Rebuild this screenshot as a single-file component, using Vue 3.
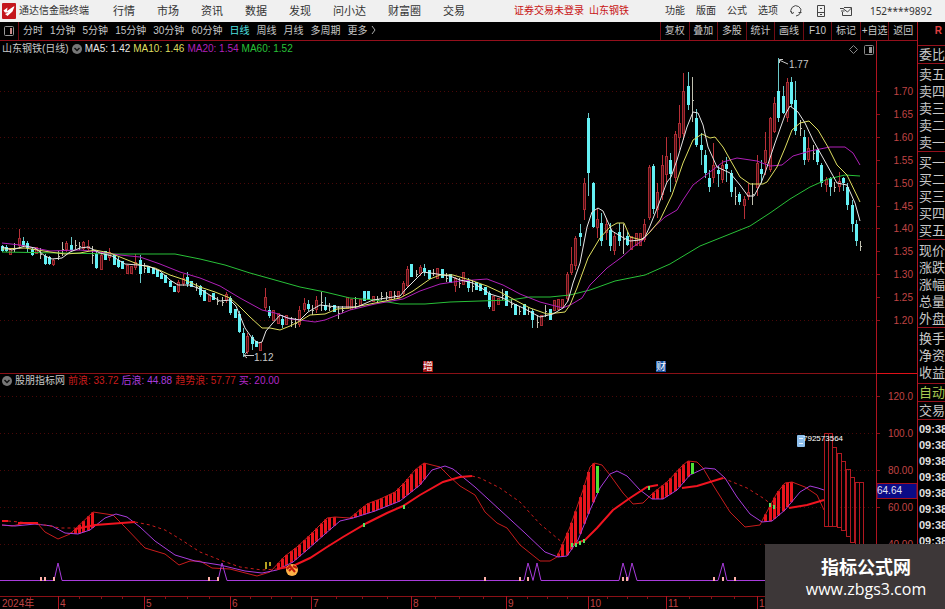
<script setup>
const navItems = ['行情', '市场', '资讯', '数据', '发现', '问小达', '财富圈', '交易']
const tools = ['功能', '版面', '公式', '选项']
const periods = ['分时', '1分钟', '5分钟', '15分钟', '30分钟', '60分钟', '日线', '周线', '月线', '多周期', '更多']
const actions = ['复权', '叠加', '多股', '统计', '画线', 'F10', '标记', '+自选', '返回']
const quoteGroups = [
  ['委比'],
  ['卖五', '卖四', '卖三', '卖二', '卖一'],
  ['买一', '买二', '买三', '买四', '买五'],
  ['现价', '涨跌', '涨幅', '总量', '外盘'],
  ['换手', '净资', '收益'],
]
const ticks = Array.from({ length: 8 }, () => '09:38')

const averages = [
  { label: 'MA5: 1.42', tone: 'white' },
  { label: 'MA10: 1.46', tone: 'yellow' },
  { label: 'MA20: 1.54', tone: 'magenta' },
  { label: 'MA60: 1.52', tone: 'green' },
]
const waves = [
  { label: '前浪: 33.72', tone: 'red' },
  { label: '后浪: 44.88', tone: 'purple' },
  { label: '趋势浪: 57.77', tone: 'red' },
  { label: '买: 20.00', tone: 'pink' },
]

// candles sit on whole pixels so that their bodies stay crisp
const candleX = (i) => Math.floor(2 + i * 4.315) + 0.5

// kind (c down, r up, w flat), high, low, body top, body bottom
const candleRows = `
c 245 252 246 251|c 245 252 247 251|r 248 255|w 243 252|r 229 249 238 246|c 237 247 241 245|c 241 252 243 248|c 248 256 249 255|r 247 254|w 248 259
c 254 265 256 264|c 256 265 257 264|r 259 266 260 265|w 251 260|w 242 256|r 241 252 243 250|c 237 251 245 250|w 240 249|w 242 250|r 241 250 242 249
r 240 251 246 249|w 246 264|c 252 269 254 268|r 252 270 255 270|c 251 260|r 248 261 252 258|c 255 265|c 257 268 260 267|c 261 269|r 265 274
r 266 274|r 254 270 262 268|c 255 283 260 274|w 263 273|c 266 273|c 268 274|c 270 277|c 273 279|c 275 283|c 281 287
c 286 292|r 280 293 282 292|r 274 286 278 284|c 272 287 277 284|c 281 287|w 283 291|c 285 297 286 295|c 290 301|r 295 302|c 293 300
w 297 305|w 297 306|r 292 303 294 301|c 296 315 298 313|c 309 318|c 311 333 314 332|c 328 357 333 353|r 333 354 336 352|c 335 350 337 344|c 341 347
r 342 351|r 288 311 297 308|c 306 318 310 316|r 310 321|r 313 324|c 315 328 319 325|r 315 325|w 317 327|w 318 328|r 306 327 310 325
r 298 312 303 310|c 300 311 304 309|w 305 315|r 296 313 300 310|w 292 311|c 297 311 305 310|w 303 311|c 305 312|w 306 319|w 306 313
r 297 309|r 299 310|w 297 309|r 299 306|c 291 301|c 291 300|r 296 302|w 296 302|w 292 300|w 292 300
r 291 300|w 291 299|r 291 298|r 281 296 283 294|r 266 287 269 286|c 264 277|w 270 277|r 265 276 267 274|c 264 276 268 272|c 270 279
w 269 276|r 268 279|c 269 278|w 273 282|c 274 283|r 277 292 278 286|w 278 288|r 272 285|c 278 292 280 288|w 280 292
c 282 290|c 284 291|c 287 295|c 291 309 293 307|r 296 311|r 298 305|w 289 300|c 291 306|w 299 308|c 304 315
w 306 315|c 304 315|w 307 315|c 309 328 311 320|w 315 328|r 315 326|w 305 317|c 309 320|r 300 311|r 299 310
r 299 308|r 272 302 274 299|r 247 275 264 273|r 236 270 238 266|c 224 246 233 237|r 178 220 183 210|c 113 196 118 173|c 182 228 183 227|r 208 238 219 228|c 213 246 223 241
r 218 240 224 233|c 223 251 230 246|r 232 255 236 251|c 223 246 232 241|w 224 254|c 232 246 236 245|r 236 250|r 233 246|r 233 246|r 219 242 224 240
r 165 220 167 218|c 164 214 166 209|r 183 218 192 210|r 155 200 165 195|r 137 182 156 175|c 153 192 160 174|r 131 182 134 178|r 105 150 123 138|r 73 140 91 134|c 72 110 86 105
w 77 122|c 109 147 118 145|c 133 165 145 150|c 150 178 155 173|c 170 192 178 187|r 143 183 165 178|c 165 187 170 174|r 160 183 165 180|c 157 182 164 169|c 170 197 173 192
w 187 205|c 192 205 194 202|r 196 219 199 206|r 183 200 192 197|w 183 205|r 155 196 163 188|c 160 183 169 174|r 132 175 150 163|r 117 172 118 170|r 97 133 103 132
c 58 122 91 118|c 86 114 96 113|r 78 122 82 118|c 77 107 82 104|c 81 135 100 131|w 120 136|c 130 165 137 160|r 137 162 148 160|w 145 160|c 148 165 150 162
c 163 187 165 183|r 177 192 179 185|c 177 196 178 187|w 182 192|r 172 192 181 187|c 177 191 178 183|c 183 210 187 205|c 200 232 205 224|c 220 246 224 241|w 241 251`

const candles = candleRows.trim().split(/[|\n]/).map((row, i) => {
  const [kind, ...n] = row.split(' ')
  const [high, low, top = high, bottom = low] = n.map(Number)
  return { kind, x: candleX(i), high, low, top, bottom }
})

const ma5 = '2,247 12,250 25,246 35,248 45,256 52,259 62,258 70,252 80,248 88,247 100,253 112,256 125,264 138,265 148,266 160,271 170,280 178,285 190,285 200,289 208,294 220,301 230,300 236,306 245,328 252,338 258,343 262,342 266,331 272,324 280,315 288,318 300,320 308,312 320,305 337,307 357,307 373,300 400,296 405,290 415,280 423,272 437,274 450,276 460,280 473,283 483,289 490,294 503,298 510,302 523,308 540,317 553,314 563,308 568,301 573,283 580,263 587,227 592,212 598,208 603,211 607,220 612,231 622,237 630,241 640,240 645,237 650,226 658,206 667,182 671,177 677,160 687,127 693,112 698,113 703,125 708,147 717,167 730,173 740,185 748,196 754,196 761,183 765,173 775,143 785,115 790,106 798,112 805,123 813,140 827,165 837,183 847,185 855,203 860,221'
const ma10 = '2,249 25,248 50,252 65,254 80,253 95,250 110,253 125,259 140,265 155,268 170,275 185,280 200,287 215,292 230,298 240,307 250,317 262,328 270,328 280,330 290,326 300,321 310,315 325,314 337,309 350,308 375,303 400,298 413,291 430,279 440,275 453,275 470,280 487,286 500,292 513,299 530,308 547,314 565,312 570,305 577,288 588,258 600,238 610,227 617,223 624,223 630,237 642,240 650,232 660,220 672,195 683,163 693,140 702,134 710,138 715,137 723,147 732,163 740,177 750,184 763,184 767,182 777,167 785,148 792,130 800,123 809,121 818,130 828,147 837,165 847,175 860,202'
const ma20 = '2,243 20,245 50,251 80,250 100,252 120,255 140,257 160,264 180,272 200,278 220,286 240,298 262,310 275,313 290,319 300,320 315,322 325,320 350,310 375,304 403,299 420,291 440,284 460,281 487,279 503,285 520,294 540,302 563,308 572,304 582,298 590,285 607,268 622,257 633,247 643,240 653,228 665,217 677,210 683,200 693,185 710,172 723,162 737,158 757,161 770,166 782,165 793,156 810,151 830,147 845,147 853,153 860,165'
const ma60 = '2,252 60,253 115,254 175,254 200,259 225,265 250,273 275,280 300,287 325,292 350,298 375,300 400,304 425,304 450,302 480,301 510,300 530,297 550,297 570,295 590,290 615,281 645,275 670,264 700,246 730,234 750,226 770,213 790,199 810,187 828,179 845,175 860,176'

const front = '2,525 12,526 25,523 38,524 45,532 58,539 70,534 93,512 113,515 125,527 145,548 165,554 179,565 190,561 200,561 212,568 230,569 257,576 270,572 285,556 297,547 310,535 327,518 335,517 350,518 367,504 380,499 395,492 405,482 415,470 424,463 440,467 450,477 460,486 475,495 485,512 497,523 507,528 520,545 530,553 540,561 550,561 557,557 570,527 583,490 590,467 594,463 602,465 610,475 623,493 633,504 643,503 653,493 667,482 683,465 688,461 697,462 703,468 713,485 730,512 745,527 760,525 763,519 777,493 785,483 792,482 805,487 817,495 824,510'
const back = '2,525 15,526 35,524 52,526 65,533 78,534 90,530 105,518 116,514 127,517 140,527 155,541 175,555 195,561 220,565 245,571 262,573 277,570 293,562 307,550 325,534 340,521 353,518 375,511 400,501 420,485 432,470 445,466 453,469 475,487 500,510 525,533 545,552 558,557 567,556 578,540 590,510 600,488 610,474 617,471 627,476 640,490 652,499 663,499 677,490 690,475 705,468 715,469 725,478 737,497 750,514 762,522 772,521 785,510 800,492 810,486 818,488 824,490'
const trendUp = [
  '2,521 8,521',
  '18,523 38,523',
  '75,529 95,525 135,522',
  '277,569 293,566 310,558 327,547 343,537 367,523 387,513 403,506 420,495 443,482 460,477 472,476',
  '572,545 585,540 597,528 613,510 630,498 647,487 658,485',
  '682,488 697,486 723,478',
  '789,508 807,505 824,500',
]
const trendDown = [
  '8,521 30,523 45,525 60,528 75,528',
  '135,522 150,525 165,530 180,539 200,552 220,560 240,567 262,570 277,569',
  '472,476 480,478 500,488 520,502 540,524 563,543',
  '723,478 730,481 747,488 763,498 775,507',
]

const parse = (s) => s.split(' ').map((p) => p.split(',').map(Number))
const frontPts = parse(front)
const backPts = parse(back)
function valueAt(pts, x) {
  for (let i = 1; i < pts.length; i++) {
    if (x <= pts[i][0]) {
      const [x0, y0] = pts[i - 1]
      const [x1, y1] = pts[i]
      return y0 + ((x - x0) / (x1 - x0)) * (y1 - y0)
    }
  }
  return pts[pts.length - 1][1]
}
const risingRanges = [[68, 94], [276, 336], [349, 426], [558, 595], [652, 689], [763, 794]]
const energyBars = candles
  .map(({ x }) => ({ x, top: valueAt(frontPts, x), bottom: valueAt(backPts, x) }))
  .filter(({ x, top, bottom }) => bottom > top && risingRanges.some(([a, b]) => x >= a && x <= b))

const spikes = 'M0 580.500H54L58 563L62 580.500H218L222 563L227 580.500H524L528 563L533 580.500L537 563L541 580.500H619L623 563L628 580.500L632 563L637 580.500H718L723 563L727 580.500H876'
const pinkMarks = [41, 45, 54, 209, 218, 485, 520, 528, 623, 627, 714, 723, 735]
const greenMarks = [[364, 523], [404, 505], [572, 543], [576, 543], [580, 541], [584, 539], [649, 486], [770, 503], [774, 505]]
const boxes = [
  [824, 433, 526], [828, 433, 526], [832, 447, 526], [837, 453, 527], [841, 461, 530],
  [846, 469, 536], [850, 477, 542], [855, 482, 552], [859, 482, 556],
].map(([x, top, bottom]) => ({ x, top, height: bottom - top }))

const priceTicks = Array.from({ length: 11 }, (_, i) => ({
  label: (1.7 - i * 0.05).toFixed(2),
  y: 91 + Math.round(i * 22.9),
  major: i % 2 === 0,
}))
const waveTicks = [['120.0', 396], ['100.0', 433], ['80.00', 470], ['60.00', 507], ['40.00', 544]]
const months = [['2024年', 0], ['4', 58], ['5', 144], ['6', 230], ['7', 311], ['8', 411], ['9', 506], ['10', 588], ['11', 666], ['12', 757]]
const minorTicks = [30, 79, 101, 122, 165, 187, 209, 250, 271, 291, 336, 362, 387, 435, 459, 483, 527, 547, 567, 607, 627, 647, 689, 711, 734]
</script>

<template>
  <div class="terminal">
    <header class="topbar">
      <svg class="logo" viewBox="0 0 14 16" aria-hidden="true">
        <rect width="14" height="16" rx="1" fill="#c4161c" />
        <path d="M1.500 7.500L5.500 4.500L5 8L11.500 3.500L12.500 3.500L10.500 8.500L5.500 13L3 11L6.500 9.500L3 9.500Z" fill="#fff" />
      </svg>
      <span class="brand">通达信金融终端</span>
      <nav class="nav">
        <a v-for="item in navItems" :key="item" href="#">{{ item }}</a>
      </nav>
      <span class="status">证券交易未登录</span>
      <span class="stock">山东钢铁</span>
      <div class="tools">
        <button v-for="tool in tools" :key="tool" type="button">{{ tool }}</button>
        <button type="button" aria-label="客服">
          <svg class="tool-icon" viewBox="0 0 14 14"><path d="M3 9.500A5 4.800 0 1 1 11.500 8.500Q10.500 11.500 7 12M1.500 7L3 9.500L5 8.500M9.500 8.500H12.500" /></svg>
        </button>
        <button type="button" aria-label="手机">
          <svg class="tool-icon" viewBox="0 0 14 14"><path d="M3.500 1.500H10.500V12.500H3.500ZM3.500 8.500H10.500M6 4.500H8M6 10.500H8" /></svg>
        </button>
        <button type="button" aria-label="邮件">
          <svg class="tool-icon" viewBox="0 0 14 14"><path d="M5 3.500H12.500V11.500H3.500V8M4 4.500L8.500 8L12.500 4M1 4.500H4.500M2 7H5.500" /></svg>
        </button>
        <span class="account">152****9892</span>
      </div>
    </header>

    <div class="workspace">
      <main class="charts">
        <div class="periodbar">
          <button class="panel-toggle" type="button" aria-label="面板">
            <svg viewBox="0 0 10 10"><rect x=".5" y=".5" width="9" height="9" rx="1" fill="none" stroke="#999" /><rect x="6" y="2" width="2" height="6" fill="#c88" /></svg>
          </button>
          <div class="periods">
            <button v-for="p in periods" :key="p" type="button" :class="{ active: p === '日线' }">
              {{ p }}<svg v-if="p === '更多'" class="chevron" viewBox="0 0 5 8"><path d="M1 0L4 4L1 8" /></svg>
            </button>
          </div>
          <div class="actions">
            <button v-for="a in actions" :key="a" type="button">{{ a }}</button>
          </div>
        </div>

        <section class="panel">
          <div class="legend">
            <span>山东钢铁(日线)</span>
            <svg class="drop" viewBox="0 0 10 10"><circle cx="5" cy="5" r="5" fill="#777" /><path d="M2.500 4L5 6.500L7.500 4" fill="none" stroke="#111" stroke-width="1.500" /></svg>
            <span v-for="m in averages" :key="m.label" :class="m.tone">{{ m.label }}</span>
          </div>
          <svg class="plot" viewBox="0 41 917 333">
            <g class="grid">
              <template v-for="t in priceTicks" :key="t.label">
                <line v-if="t.major" x1="0" x2="876" :y1="t.y + 0.5" :y2="t.y + 0.5" />
              </template>
            </g>
            <g v-for="(c, i) in candles" :key="i" :class="['candle', c.kind]">
              <line :x1="c.x" :x2="c.x" :y1="c.high" :y2="c.low" />
              <rect v-if="c.kind === 'c'" :x="c.x - 1.5" :y="c.top" width="3" :height="c.bottom - c.top" />
              <rect v-else-if="c.kind === 'r'" :x="c.x - 1" :y="c.top + 0.5" width="2" :height="c.bottom - c.top - 1" />
              <line v-else :x1="c.x - 0.5" :x2="c.x + 1.5" :y1="Math.round((c.high + c.low) / 2) + 0.5" :y2="Math.round((c.high + c.low) / 2) + 0.5" />
            </g>
            <polyline class="curve green" :points="ma60" />
            <polyline class="curve magenta" :points="ma20" />
            <polyline class="curve yellow" :points="ma10" />
            <polyline class="curve white" :points="ma5" />
            <path class="pointer" d="M788 64L779 60M783 59.500H779.500V63M254 355.500H244M247 352L244 355.500L247 358" />
            <text class="note" x="789" y="68">1.77</text>
            <text class="note" x="254" y="361">1.12</text>
            <path class="pointer dim" d="M853.500 45.500L857.500 49.500L853.500 53.500L849.500 49.500Z" />
            <rect class="pointer dim" x="864.500" y="45.500" width="9" height="9" rx="1" />
            <rect x="869" y="47" width="3" height="6" fill="#999" />
            <rect x="423" y="361" width="10" height="11" fill="#a01010" />
            <text class="event" x="423" y="370">增</text>
            <rect x="656" y="361" width="10" height="11" fill="#1850a0" />
            <text class="event" x="656" y="370">财</text>
            <line class="frame" x1="876.500" x2="876.500" y1="41" y2="374" />
            <line class="frame dark" x1="0" x2="876" y1="373.500" y2="373.500" />
            <line class="frame bright" x1="876" x2="917" y1="373.500" y2="373.500" />
            <g v-for="t in priceTicks" :key="t.label">
              <line class="frame dark" x1="877" x2="880" :y1="t.y + 0.5" :y2="t.y + 0.5" />
              <text class="scale" x="913" :y="t.y + 4">{{ t.label }}</text>
            </g>
          </svg>
        </section>

        <section class="panel">
          <div class="legend lower">
            <svg class="drop" viewBox="0 0 10 10"><circle cx="5" cy="5" r="5" fill="#777" /><path d="M2.500 4L5 6.500L7.500 4" fill="none" stroke="#111" stroke-width="1.500" /></svg>
            <span>股朋指标网</span>
            <span v-for="w in waves" :key="w.label" :class="w.tone">{{ w.label }}</span>
          </div>
          <svg class="plot" viewBox="0 374 917 235">
            <g class="grid">
              <line v-for="[label, y] in waveTicks" :key="label" x1="0" x2="876" :y1="y + 0.5" :y2="y + 0.5" />
            </g>
            <rect v-for="b in energyBars" :key="b.x" class="energy" :x="b.x - 1.5" :y="b.top" width="3" :height="b.bottom - b.top" />
            <polyline class="curve red" :points="front" />
            <polyline class="curve purple" :points="back" />
            <polyline v-for="t in trendDown" :key="t" class="curve red dashed" :points="t" />
            <polyline v-for="t in trendUp" :key="t" class="curve trend" :points="t" />
            <rect x="596" y="466" width="3" height="27" fill="#4de234" />
            <rect x="691" y="463" width="3" height="11" fill="#4de234" />
            <rect v-for="[x, y] in greenMarks" :key="x" :x="x - 1" :y="y" width="2" height="4" fill="#5be05b" />
            <path d="M266 562V569M270 562V566" stroke="#b5a020" stroke-width="2" />
            <path class="curve purple" :d="spikes" />
            <rect v-for="x in pinkMarks" :key="x" :x="x - 1" y="577" width="2" height="4" fill="#ffb0a8" />
            <circle cx="292" cy="570" r="6" fill="#ffb347" />
            <path d="M287 569L290 566L295 572M297 568L293 566M289 571L291 569" fill="none" stroke="#c01808" stroke-width="2" />
            <rect v-for="b in boxes" :key="b.x" class="box" :x="b.x + 0.5" :y="b.top + 0.5" width="4" :height="b.height" />
            <rect x="797" y="435" width="8" height="12" rx="1" fill="#8fc0ee" />
            <path d="M799 438.500H803M799 443.500H803" stroke="#e8f4ff" />
            <text class="code" x="803" y="441">792573564</text>
            <line class="frame dark" x1="0" x2="876" y1="596.500" y2="596.500" />
            <path v-for="x in minorTicks" :key="x" class="frame dark" :d="`M${x + 0.5} 596V599`" />
            <g v-for="[label, x] in months" :key="label">
              <line v-if="x" class="frame" :x1="x + 0.5" :x2="x + 0.5" y1="596" y2="609" />
              <text class="month" :x="x + 2" y="607">{{ label }}</text>
            </g>
            <line class="frame" x1="876.500" x2="876.500" y1="374" y2="609" />
            <g v-for="[label, y] in waveTicks" :key="label">
              <line class="frame dark" x1="877" x2="880" :y1="y + 0.5" :y2="y + 0.5" />
              <text class="scale" x="913" :y="y + 4">{{ label }}</text>
            </g>
            <rect x="877" y="483.500" width="40" height="15" fill="#0b0b86" stroke="#a01020" />
            <text class="current" x="877" y="494">64.64</text>
          </svg>
        </section>
      </main>

      <aside class="quotes">
        <div class="mark">R</div>
        <div v-for="(group, g) in quoteGroups" :key="g" class="group">
          <div v-for="row in group" :key="row">{{ row }}</div>
        </div>
        <div class="group auto">自动</div>
        <div class="group">交易</div>
        <div class="times">
          <div v-for="(t, i) in ticks" :key="i">{{ t }}</div>
        </div>
      </aside>
    </div>

    <div class="watermark">
      <strong>指标公式网</strong>
      <span>www.zbgs3.com</span>
    </div>
  </div>
</template>

<style>
body {
  margin: 0;
  background: #000;
}
</style>

<style scoped>
.terminal {
  position: relative;
  min-height: 100vh;
  overflow: hidden;
  background: #000;
  color: #c8c8c8;
  font: 10px/14px "Liberation Sans", "Noto Sans CJK SC", sans-serif;
}
button {
  padding: 0;
  border: 0;
  background: none;
  color: inherit;
  font: inherit;
  white-space: nowrap;
}
a {
  color: inherit;
  text-decoration: none;
}
.topbar {
  display: flex;
  align-items: center;
  height: 22px;
  padding: 0 13px 0 2px;
  background: #f0f0f0;
  color: #333;
  white-space: nowrap;
}
.logo {
  width: 14px;
  height: 16px;
  margin-right: 3px;
}
.nav {
  display: flex;
  gap: 22px;
  margin-left: 24px;
  font-size: 11px;
}
.status {
  margin-left: 49px;
  color: #c81414;
}
.stock {
  margin-left: 5px;
  color: #c81414;
}
.tools {
  display: flex;
  align-items: center;
  gap: 11px;
  margin-left: auto;
}
.tool-icon {
  display: block;
  width: 14px;
  height: 14px;
  fill: none;
  stroke: #444;
}
.account {
  margin-left: 6px;
  font-family: "Noto Sans", "Liberation Sans", sans-serif;
}
.workspace {
  display: flex;
}
.charts {
  flex: 1;
  min-width: 0;
}
.periodbar {
  display: flex;
  box-sizing: border-box;
  height: 19px;
  border-bottom: 1px solid #94101c;
}
.panel-toggle {
  display: flex;
  align-items: center;
  justify-content: center;
  width: 19px;
  border-right: 1px solid #700c14;
}
.panel-toggle svg {
  width: 10px;
  height: 10px;
}
.periods {
  display: flex;
  gap: 7px;
  padding-left: 4px;
}
.periods .active {
  color: #4fe0e0;
}
.chevron {
  width: 5px;
  height: 8px;
  margin-left: 3px;
  fill: none;
  stroke: #aaa;
}
.actions {
  display: grid;
  grid-template-columns: repeat(9, 1fr);
  width: 257px;
  margin-left: auto;
}
.actions button {
  border-left: 1px solid #700c14;
}
.panel {
  position: relative;
}
.legend {
  position: absolute;
  top: 1px;
  left: 2px;
  display: flex;
  align-items: center;
  gap: 3px;
  white-space: nowrap;
}
.legend.lower {
  top: 0;
}
.drop {
  width: 10px;
  height: 10px;
}
.plot {
  display: block;
  width: 100%;
  height: auto;
}
.white { color: #e6e6e6; }
.yellow { color: #dede60; }
.magenta { color: #b020b8; }
.green { color: #28c038; }
.red { color: #c81c1c; }
.purple { color: #a83cdc; }
.pink { color: #b428c8; }
.curve {
  fill: none;
  stroke: currentColor;
  stroke-width: 1px;
}
.dashed {
  stroke-dasharray: 3 3;
}
.trend {
  stroke: #f01420;
  stroke-width: 2px;
}
.grid line {
  stroke: #4a0808;
  stroke-dasharray: 1 3;
}
.candle line {
  stroke-width: 1px;
}
.c line { stroke: #6ac8c8; }
.c rect { fill: #64f0f4; }
.r line { stroke: #b83038; }
.r rect {
  fill: #4a1014;
  stroke: #a82a32;
}
.w line { stroke: #c0c0b0; }
.energy {
  fill: #e8141c;
}
.box {
  fill: none;
  stroke: #b01820;
}
.frame {
  fill: none;
  stroke: #b01420;
}
.frame.dark {
  stroke: #8a1016;
}
.frame.bright {
  stroke: #e01018;
}
.pointer {
  fill: none;
  stroke: #c8c8c8;
}
.pointer.dim {
  stroke: #888;
}
.note {
  fill: #c8c8c8;
  font-size: 10px;
}
.event {
  fill: #fff;
  font-size: 10px;
}
.scale {
  fill: #c04444;
  font-size: 10px;
  text-anchor: end;
}
.month {
  fill: #c04444;
  font-size: 10px;
}
.code {
  fill: #fff;
  font-size: 8px;
}
.current {
  fill: #e0e0f0;
  font-size: 10px;
}
.quotes {
  flex: none;
  box-sizing: border-box;
  width: 28px;
  height: 587px;
  overflow: hidden;
  border-left: 1px solid #b01420;
  font-size: 13px;
  line-height: 17px;
  white-space: nowrap;
}
.mark {
  height: 23px;
  padding-right: 3px;
  color: #e04040;
  font-size: 10px;
  font-weight: bold;
  line-height: 18px;
  text-align: right;
}
.group {
  padding-left: 1px;
  border-top: 1px solid #94101c;
}
.group:nth-child(n + 3):nth-child(-n + 6) {
  padding-top: 2px;
}
.group:nth-child(6) {
  padding-bottom: 2px;
}
.auto {
  color: #a8c850;
}
.times {
  padding: 1px 0 0 1px;
  border-top: 1px solid #94101c;
  color: #e0e0e0;
  font-family: "Liberation Sans Narrow", "Liberation Sans", sans-serif;
  font-size: 11px;
  font-weight: bold;
  line-height: 16px;
}
.watermark {
  position: absolute;
  right: 0;
  bottom: 0;
  display: flex;
  flex-direction: column;
  align-items: center;
  box-sizing: border-box;
  width: 180px;
  height: 65px;
  padding: 14px 0 0 22px;
  background: #3d3738;
  color: #fff;
}
.watermark strong {
  font-size: 18px;
  line-height: 21px;
}
.watermark span {
  font-family: "Open Sans", "Noto Sans", sans-serif;
  font-size: 16px;
  line-height: 20px;
}
</style>
